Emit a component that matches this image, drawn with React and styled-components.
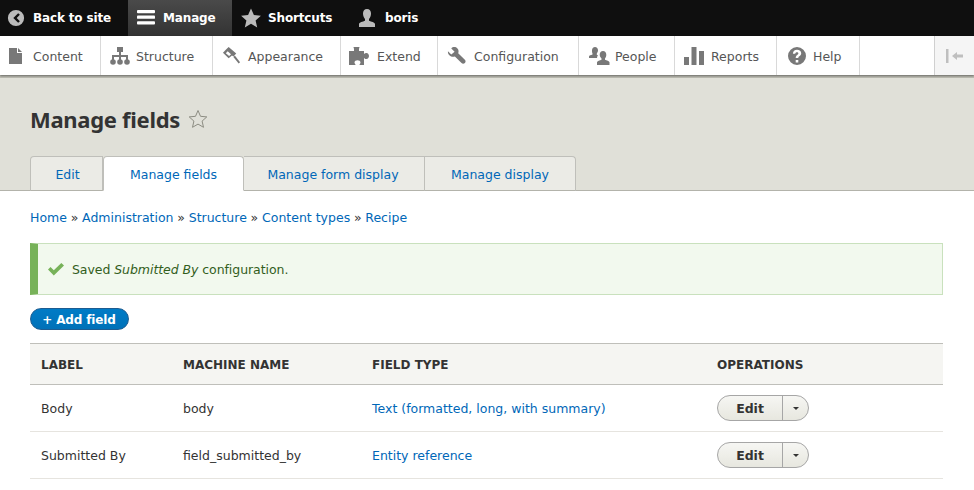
import styled, { createGlobalStyle } from "styled-components";

const Global = createGlobalStyle`
html,body{margin:0;padding:0;background:#fff;overflow:hidden;}
body{font-family:"DejaVu Sans",sans-serif;font-size:13px;color:#333;}
a{color:#0067b8;text-decoration:none;}
`
const Page = styled.div`
width:974px;
height:490px;
overflow:hidden;
`
const TopBar = styled.div`
height:36px;
background:#0f0f0f;
display:flex;
`
const TopItem = styled.div`
width:${p => p.$w}px;
display:flex;
align-items:center;
gap:${p => p.$gap || 8}px;
padding-left:${p => p.$pl || 8}px;
box-sizing:border-box;
color:#fff;
font-weight:700;
font-size:12px;
letter-spacing:-.15px;
background:${p => p.$active ? "linear-gradient(#4a4a4a,#333)" : "none"};
`
const Tray = styled.div`
height:39px;
background:#fff;
display:flex;
box-shadow:0 1px 2px rgba(0,0,0,.45), 0 3px 0 #bdbdb3;
position:relative;
`
const TrayItem = styled.div`
width:${p => p.$w}px;
box-sizing:border-box;
display:flex;
align-items:center;
gap:${p => p.$gap || 8}px;
padding-left:${p => p.$pl || 8}px;
border-right:1px solid #d9d9d9;
color:#565656;
font-size:12.5px;
`
const TrayLabel = styled.span`
padding-top:1px;
`
const TraySpacer = styled.div`
flex:1;
`
const Collapse = styled.div`
width:39px;
background:#f5f5f5;
border-left:1px solid #d0d0d0;
display:flex;
align-items:center;
justify-content:center;
`
const Header = styled.div`
height:116px;
background:#e0e0d8;
box-sizing:border-box;
padding:30px 30px 0;
border-bottom:1px solid #b3b3ab;
display:flex;
flex-direction:column;
justify-content:space-between;
`
const TitleRow = styled.div`
display:flex;
align-items:center;
gap:8px;
`
const Title = styled.h1`
margin:0;
font-size:22px;
line-height:28px;
font-weight:700;
color:#333;
letter-spacing:-.3px;
font-family:"Noto Sans","DejaVu Sans",sans-serif;
`
const Tabs = styled.div`
display:flex;
margin-bottom:-1px;
`
const Tab = styled.a`
width:${p => p.$w}px;
box-sizing:border-box;
height:35px;
display:flex;
align-items:center;
justify-content:center;
padding-top:2px;
padding-left:${p => p.$first ? 2 : 0}px;
padding-right:${p => p.$nudge ? 2 : 0}px;
background:${p => p.$active ? "#fff" : "#ebebe6"};
border:1px solid #bfbfba;
border-left-width:${p => p.$first || p.$active ? 1 : 0}px;
border-bottom:${p => p.$active ? "1px solid #fff" : "1px solid #b3b3ab"};
border-radius:${p => p.$first ? "4px 0 0 0" : p.$last ? "0 4px 0 0" : p.$active ? "4px 4px 0 0" : "0"};
font-size:12.5px;
`
const Main = styled.div`
padding:0 31px 0 30px;
`
const Crumbs = styled.div`
height:52px;
display:flex;
align-items:center;
gap:3.75px;
font-size:12.5px;
color:#333;
`
const Message = styled.div`
height:52px;
box-sizing:border-box;
background:#f2f9ee;
border:1px solid #c9e1bd;
border-left:8px solid #77b259;
display:flex;
align-items:center;
gap:8px;
padding-left:10px;
font-size:12.5px;
letter-spacing:-.06px;
color:#325e1c;
`
const AddButton = styled.a`
display:inline-flex;
align-items:center;
justify-content:center;
box-sizing:border-box;
margin-top:13px;
width:99px;
height:22px;
padding:1px 1px 0 0;
border-radius:11px;
border:1px solid #1e5c90;
background:linear-gradient(#007bc6,#0071b8);
color:#fff;
font-weight:700;
font-size:12px;
letter-spacing:-.15px;
`
const Table = styled.table`
width:100%;
margin-top:13px;
border-collapse:collapse;
table-layout:fixed;
`
const Th = styled.th`
width:${p => p.$w}px;
height:41px;
box-sizing:border-box;
padding:2px 0 0 11px;
text-align:left;
background:#f5f5f2;
border-top:1px solid #bfbfba;
border-bottom:1px solid #bfbfba;
font-size:12px;
font-weight:700;
color:#333;
text-transform:uppercase;
`
const Td = styled.td`
height:47px;
box-sizing:border-box;
padding:0 0 0 11px;
border-bottom:1px solid #e6e4df;
font-size:12.5px;
color:#333;
`
const SplitButton = styled.div`
display:flex;
width:92px;
height:26px;
box-sizing:border-box;
border:1px solid #a6a6a6;
border-radius:13px;
background:linear-gradient(#f6f6f3,#e7e7df);
overflow:hidden;
`
const EditPart = styled.div`
width:64px;
display:flex;
align-items:center;
justify-content:center;
border-right:1px solid #a6a6a6;
font-weight:700;
font-size:12.5px;
color:#333;
`
const CaretPart = styled.div`
flex:1;
display:flex;
align-items:center;
justify-content:center;
`
const Caret = styled.div`
width:0;
height:0;
border-left:3px solid transparent;
border-right:3px solid transparent;
border-top:3px solid #333;
`

const Ico = ({ w = 20, h = 20, vb = "0 0 20 20", fill = "#787878", children }) => (
    <svg width={w} height={h} viewBox={vb} fill={fill} style={{ flex: "none" }}>{children}</svg>
)

const rows = [
    ["Body", "body", "Text (formatted, long, with summary)"],
    ["Submitted By", "field_submitted_by", "Entity reference"],
]

function App() {
    return (
        <Page>
            <Global />
            <TopBar>
                <TopItem $w={128} $pl={7} $gap={8}>
                    <Ico w={18} h={18} fill="#bbb">
                        <path fillRule="evenodd" d="M10 1a9 9 0 1 0 0 18 9 9 0 0 0 0-18zm2.400 3.600 1.900 1.900L10.800 10l3.500 3.500-1.900 1.900L7 10z" />
                    </Ico>
                    Back to site
                </TopItem>
                <TopItem $w={104} $active $pl={8} $gap={7}>
                    <Ico w={20} h={18} fill="#fff">
                        <rect x="0" y="1" width="20" height="3.600" rx="1" />
                        <rect x="0" y="7.300" width="20" height="3.600" rx="1" />
                        <rect x="0" y="13.600" width="20" height="3.600" rx="1" />
                    </Ico>
                    Manage
                </TopItem>
                <TopItem $w={117} $pl={9} $gap={7}>
                    <Ico w={20} h={20} fill="#bbb">
                        <path d="M10 0.500l2.900 6.500 7 .7-5.300 4.700 1.600 7L10 15.800l-6.200 3.600 1.600-7L.1 7.700l7-.7z" />
                    </Ico>
                    Shortcuts
                </TopItem>
                <TopItem $w={100} $pl={8} $gap={8}>
                    <Ico w={20} h={20} fill="#bbb">
                        <path d="M10 1c2.600 0 4 2 4 4.600 0 2.400-1 4.300-2 5.400v1.800c2 .8 6 1.700 6 3.200V19H2v-3c0-1.500 4-2.400 6-3.200V11C7 9.900 6 8 6 5.600 6 3 7.400 1 10 1z" />
                    </Ico>
                    boris
                </TopItem>
            </TopBar>
            <Tray>
                <TrayItem $w={101} $pl={9} $gap={10}>
                    <Ico w={14} h={16} vb="0 0 14 16">
                        <path d="M0 0h8v5h5v11H0zM9 0l4 4H9z" />
                    </Ico>
                    <TrayLabel>Content</TrayLabel>
                </TrayItem>
                <TrayItem $w={112} $pl={9} $gap={6}>
                    <Ico w={20} h={18} vb="0 0 20 18">
                        <rect x="7" y="0" width="6" height="5" />
                        <path d="M9 5h2v3h7v5h-2v-3h-5v3H9v-3H4v3H2V8h7z" />
                        <circle cx="3" cy="15" r="2.800" />
                        <circle cx="10" cy="15" r="2.800" />
                        <circle cx="17" cy="15" r="2.800" />
                    </Ico>
                    <TrayLabel>Structure</TrayLabel>
                </TrayItem>
                <TrayItem $w={128} $pl={9} $gap={7}>
                    <Ico w={19} h={19} vb="0 0 20 20">
                        <path fillRule="evenodd" d="M7 1l8 7-3 3-1.500-1-3.500 3-6-6 3.500-3.500zM6 5.500 4 7.500l3.500 3 2-1.800z" />
                        <path d="M12 11.500l1.500-1.500 5.500 7-1.500 1.500z" />
                    </Ico>
                    <TrayLabel>Appearance</TrayLabel>
                </TrayItem>
                <TrayItem $w={97} $pl={8} $gap={7}>
                    <Ico w={21} h={18} vb="0 0 21 18">
                        <path d="M0 4h5V2.500C5 1 4.500 1 4.500 0h6c0 1-.5 1-.5 2.500V4h5v3c1-1 1.500-1 2.500-1C19 6 20 7.500 20 9s-1 3-2.500 3c-1 0-1.500 0-2.500-1v7h-4.500c0-1 1-1.200 1-2.500 0-1.500-1.500-2.200-3-2.200s-3 .7-3 2.200c0 1.300 1 1.500 1 2.500H0z" />
                    </Ico>
                    <TrayLabel>Extend</TrayLabel>
                </TrayItem>
                <TrayItem $w={141} $pl={9} $gap={8}>
                    <Ico w={19} h={19} vb="0 0 20 20">
                        <path d="M1 5.500 4.500 9 8 6 4.500 2.500C6 .8 9 .5 11 2.500c1.300 1.300 1.500 3.500.8 5l7 7c1 1 1 2.500 0 3.500s-2.500 1-3.500 0l-7-7c-2 .8-4.200.3-5.500-1C1.200 8.500.8 7 1 5.500z" />
                    </Ico>
                    <TrayLabel>Configuration</TrayLabel>
                </TrayItem>
                <TrayItem $w={96} $pl={10} $gap={5}>
                    <Ico w={21} h={20} vb="0 0 21 20">
                        <path d="M6 1c1.800 0 3 1.400 3 3.300 0 1.300-.6 2.400-1.200 3.200v1.200L9 9.500c-.7.600-1 1.500-1 2.500H0v-1.500c0-1 2-1.400 3.500-2V7.500C3 6.700 3 5.600 3 4.300 3 2.400 4.200 1 6 1z" />
                        <path d="M14 5c2 0 3.300 1.500 3.300 3.700 0 1.600-.7 2.900-1.300 3.700v1.300c1.500.7 4.500 1.300 4.500 2.500V19H8v-2.800c0-1.200 3-1.800 4.500-2.500v-1.300c-.7-.8-1.800-2.100-1.800-3.700C10.700 6.500 12 5 14 5z" />
                    </Ico>
                    <TrayLabel>People</TrayLabel>
                </TrayItem>
                <TrayItem $w={102} $pl={9} $gap={7}>
                    <Ico w={20} h={20} vb="0 0 20 20">
                        <rect x="0" y="11" width="5" height="8" />
                        <rect x="7.500" y="1" width="5" height="18" />
                        <rect x="15" y="5" width="5" height="14" />
                    </Ico>
                    <TrayLabel>Reports</TrayLabel>
                </TrayItem>
                <TrayItem $w={83} $pl={11} $gap={7}>
                    <Ico w={18} h={18} vb="0 0 18 18">
                        <path fillRule="evenodd" d="M9 0a9 9 0 1 0 0 18A9 9 0 0 0 9 0zM7.700 13h2.600v2.400H7.700zM9 2.800c2.500 0 4.200 1.300 4.200 3.400 0 1.500-.9 2.300-1.800 3-.7.500-1.100.9-1.100 1.800H7.700c0-1.700.6-2.400 1.500-3.100.7-.5 1.200-.9 1.200-1.500 0-.7-.6-1.200-1.500-1.200-1 0-1.600.6-1.700 1.600H4.900C5 4.300 6.600 2.800 9 2.800z" />
                    </Ico>
                    <TrayLabel>Help</TrayLabel>
                </TrayItem>
                <TraySpacer />
                <Collapse>
                    <Ico w={20} h={16} vb="0 0 20 16" fill="#bfbfbf">
                        <rect x="1" y="1" width="2.500" height="14" />
                        <path d="M7 8l5-4v2.500h6v3h-6V12z" />
                    </Ico>
                </Collapse>
            </Tray>
            <Header>
                <TitleRow>
                    <Title>Manage fields</Title>
                    <Ico w={20} h={20} fill="none">
                        <path d="M10 1.500l2.500 5.800 6.300.6-4.700 4.200 1.400 6.200L10 15.100l-5.500 3.200 1.400-6.200L1.200 7.900l6.300-.6z" stroke="#8c8c82" strokeWidth="1" />
                    </Ico>
                </TitleRow>
                <Tabs>
                    <Tab $first $w={73}>Edit</Tab>
                    <Tab $active $w={141}>Manage fields</Tab>
                    <Tab $nudge $w={181}>Manage form display</Tab>
                    <Tab $last $w={151}>Manage display</Tab>
                </Tabs>
            </Header>
            <Main>
                <Crumbs>
                    <a>Home</a>»<a>Administration</a>»<a>Structure</a>»<a>Content types</a>»<a>Recipe</a>
                </Crumbs>
                <Message>
                    <Ico w={16} h={14} vb="0 0 16 14" fill="#77b259">
                        <path d="M0 7.500l2.500-2.500 3.300 3.300L13.300 1 16 3.500 5.800 13.500z" />
                    </Ico>
                    <span>Saved <em>Submitted By</em> configuration.</span>
                </Message>
                <AddButton>+ Add field</AddButton>
                <Table>
                    <thead>
                        <tr>
                            <Th $w={142}>Label</Th>
                            <Th $w={189}>Machine name</Th>
                            <Th $w={345}>Field type</Th>
                            <Th>Operations</Th>
                        </tr>
                    </thead>
                    <tbody>
                        {rows.map(r => (
                            <tr key={r[1]}>
                                <Td>{r[0]}</Td>
                                <Td>{r[1]}</Td>
                                <Td><a>{r[2]}</a></Td>
                                <Td>
                                    <SplitButton>
                                        <EditPart>Edit</EditPart>
                                        <CaretPart><Caret /></CaretPart>
                                    </SplitButton>
                                </Td>
                            </tr>
                        ))}
                    </tbody>
                </Table>
            </Main>
        </Page>
    )
}

export default App;
